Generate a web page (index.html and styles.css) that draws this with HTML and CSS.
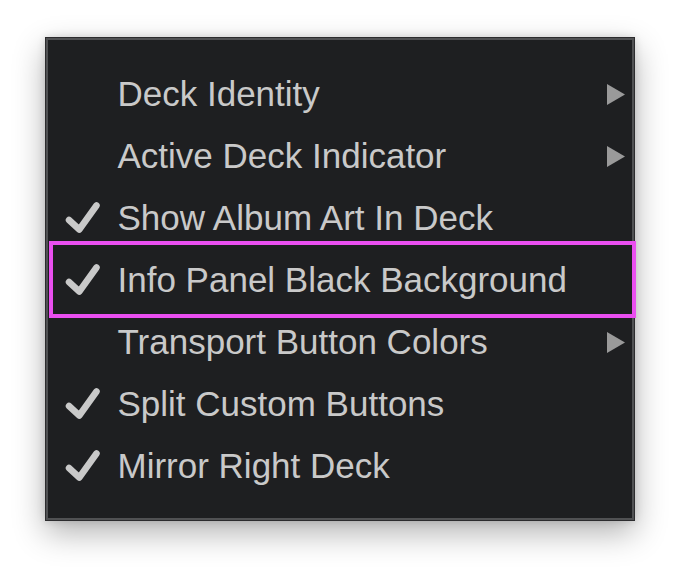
FILE: index.html
```
<!DOCTYPE html>
<html>
<head>
<meta charset="utf-8">
<link rel="stylesheet" href="styles.css">
</head>
<body>
<div class="menu">
  <div class="item">
    <span class="check"></span>
    <span class="label">Deck Identity</span>
    <svg class="arrow" viewBox="0 0 18 21"><polygon points="0,0 18,10.5 0,21"/></svg>
  </div>
  <div class="item">
    <span class="check"></span>
    <span class="label">Active Deck Indicator</span>
    <svg class="arrow" viewBox="0 0 18 21"><polygon points="0,0 18,10.5 0,21"/></svg>
  </div>
  <div class="item">
    <span class="check"><svg viewBox="0 0 36 36"><polyline points="5,20 15.3,29.5 32.5,5.5"/></svg></span>
    <span class="label">Show Album Art In Deck</span>
  </div>
  <div class="item selected">
    <span class="check"><svg viewBox="0 0 36 36"><polyline points="5,20 15.3,29.5 32.5,5.5"/></svg></span>
    <span class="label">Info Panel Black Background</span>
  </div>
  <div class="item">
    <span class="check"></span>
    <span class="label">Transport Button Colors</span>
    <svg class="arrow" viewBox="0 0 18 21"><polygon points="0,0 18,10.5 0,21"/></svg>
  </div>
  <div class="item">
    <span class="check"><svg viewBox="0 0 36 36"><polyline points="5,20 15.3,29.5 32.5,5.5"/></svg></span>
    <span class="label">Split Custom Buttons</span>
  </div>
  <div class="item">
    <span class="check"><svg viewBox="0 0 36 36"><polyline points="5,20 15.3,29.5 32.5,5.5"/></svg></span>
    <span class="label">Mirror Right Deck</span>
  </div>
</div>
</body>
</html>
```
FILE: styles.css
```
html, body {
  margin: 0;
  padding: 0;
  background: #ffffff;
}
body {
  box-sizing: border-box;
  min-height: 574px;
  padding: 37px 0 0 45px;
  font-family: "Liberation Sans", Arial, sans-serif;
}
.menu {
  box-sizing: border-box;
  width: 590px;
  height: 484px;
  background: #1e1f21;
  border: 1px solid #2c2c2e;
  box-shadow: inset 0 0 0 2px #505153, 0 12px 30px rgba(0,0,0,0.3), 0 0 8px rgba(0,0,0,0.14);
  padding: 25px 0 0 0;
  display: flex;
  flex-direction: column;
}
.item {
  position: relative;
  height: 62px;
  display: flex;
  align-items: center;
  padding-right: 9px;
  color: #c9c9c9;
  font-size: 35px;
}
.check {
  width: 36px;
  height: 36px;
  margin-left: 18px;
  margin-right: 17.5px;
  flex: none;
}
.check svg {
  display: block;
  width: 36px;
  height: 36px;
}
.check polyline {
  fill: none;
  stroke: #c9c9c9;
  stroke-width: 6.5;
  stroke-linecap: round;
  stroke-linejoin: round;
}
.label {
  flex: 1;
  white-space: nowrap;
}
.arrow {
  width: 18px;
  height: 21px;
  flex: none;
  fill: #9a9a9a;
}
.selected::after {
  content: "";
  position: absolute;
  left: 3px;
  right: -2px;
  top: -8px;
  bottom: -7px;
  border: 4px solid #ea4ff0;
}
```
